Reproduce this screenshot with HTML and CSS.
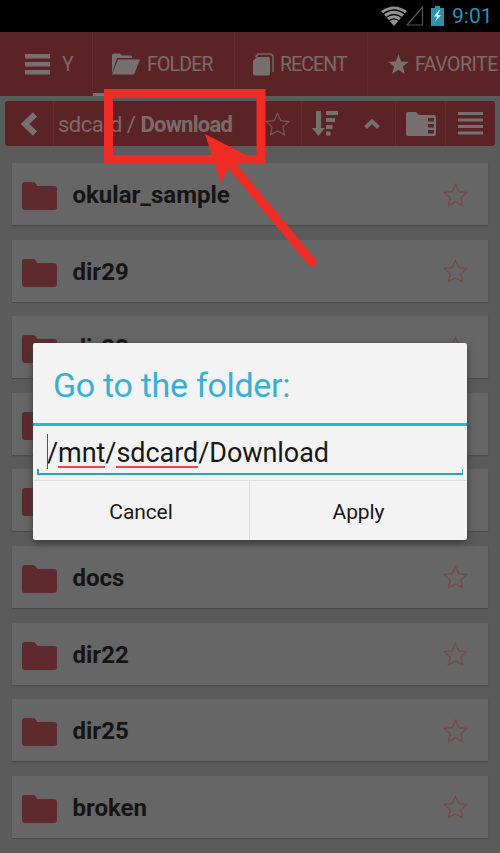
FILE: index.html
```html
<!DOCTYPE html>
<html lang="en">
<head>
<meta charset="utf-8">
<title>Folder</title>
<link rel="stylesheet" href="styles.css">
</head>
<body>
<svg class="defs" width="0" height="0">
  <symbol id="folder" viewBox="0 0 35 28"><path d="M3 0H11Q13 0 14 2L15.500 4H32Q35 4 35 7V25Q35 28 32 28H3Q0 28 0 25V3Q0 0 3 0Z"/></symbol>
  <symbol id="star" viewBox="0 0 24 24"><path d="M12 1.500L14.800 8.800L22.700 9.200L16.600 14.100L18.700 21.800L12 17.600L5.300 21.800L7.400 14.100L1.300 9.200L9.200 8.800Z"/></symbol>
  <symbol id="star-outline" viewBox="0 0 24 24"><path d="M12 1.500L15.200 8.300L22.700 9.200L17.200 14.300L18.700 21.800L12 18.200L5.300 21.800L6.800 14.300L1.300 9.200L8.800 8.300Z"/></symbol>
</svg>
<div class="screen">
  <header class="status">
    <svg class="wifi" width="26" height="20" viewBox="0 0 26 20"><path d="M0 5Q13-4 26 5L13 20Z" fill="#929292"/><path d="M1.500 8.500Q13-.5 24.500 8.500M4.500 12Q13 5 21.500 12M7.500 15.200Q13 10.500 18.500 15.200" fill="none" stroke="#000" stroke-width="1.300"/></svg>
    <svg class="signal" width="18" height="20" viewBox="0 0 18 20"><path d="M1 19L16.500 1V19Z" fill="none" stroke="#55524d" stroke-width="1.200"/></svg>
    <svg class="battery" width="13" height="20" viewBox="0 0 13 20"><path d="M4 0H9V2H13V20H0V2H4Z" fill="#2b8fae"/><path d="M8 4L3 10.500H6L4 16L10 9H7L9 4Z" fill="#d9eef4"/></svg>
    <span class="clock">9:01</span>
  </header>
  <nav class="tabs">
    <div class="tab tab-menu"><svg width="25" height="21" viewBox="0 0 25 21"><path d="M0 0H25V4.500H0ZM0 8H25V12.500H0ZM0 16H25V20.500H0Z"/></svg><span>Y</span></div>
    <div class="tab tab-folder active"><svg width="28" height="22" viewBox="0 0 28 22"><path d="M0 20V2Q0 .5 1.500 .5H8L10 2.500H19Q20 2.500 20 4V5H5L0 20ZM6 6.500H28L22 21.500H0Z"/></svg><span>FOLDER</span></div>
    <div class="tab tab-recent"><svg width="21" height="23" viewBox="0 0 21 23"><path d="M4 4H15Q17 4 17 6V20.500Q17 22.500 15 22.500H2Q0 22.500 0 20.500V8Z"/><path d="M2.500 4L5 1H17Q20 1 20 4V19" fill="none" stroke="#72696a" stroke-width="1.500"/></svg><span>RECENT</span></div>
    <div class="tab tab-favorite"><svg width="23" height="23"><use href="#star"/></svg><span>FAVORITE</span></div>
  </nav>
  <div class="toolbar">
    <div class="tool back"><svg width="17" height="24" viewBox="0 0 17 24"><path d="M14 2.500L4 12L14 21.500" fill="none" stroke="#777071" stroke-width="6"/></svg></div>
    <div class="path"><span class="crumb">sdcard /</span><b>Download</b><svg class="outline" width="25" height="25"><use href="#star-outline"/></svg></div>
    <div class="tool sort"><svg width="27" height="25" viewBox="0 0 27 25"><path d="M4 0H9V17H13L6.500 25L0 17H4ZM14 0H26V4H14ZM14 7H23V11H14ZM14 14H20.500V18H14ZM14 20.500H18.500V24.500H14Z"/></svg></div>
    <div class="tool up"><svg width="16" height="10" viewBox="0 0 16 10"><path d="M1.500 8.500L8 2.500L14.500 8.500" fill="none" stroke="#777071" stroke-width="4"/></svg></div>
    <div class="tool storage"><svg width="30" height="24" viewBox="0 0 30 24"><path fill-rule="evenodd" d="M2 0H10L13 3H28Q30 3 30 5V22Q30 24 28 24H2Q0 24 0 22V2Q0 0 2 0ZM22 6V9.500H28V6ZM22 12V15.500H28V12ZM22 18V21.500H28V18Z"/></svg></div>
    <div class="tool list"><svg width="25" height="23" viewBox="0 0 25 23"><path d="M0 0H25V3H0ZM0 6.500H25V9.500H0ZM0 13H25V16H0ZM0 19.500H25V22.500H0Z"/></svg></div>
  </div>
  <main class="files">
    <div class="row"><svg class="folder"><use href="#folder"/></svg><b>okular_sample</b><svg class="fav"><use href="#star-outline"/></svg></div>
    <div class="row"><svg class="folder"><use href="#folder"/></svg><b>dir29</b><svg class="fav"><use href="#star-outline"/></svg></div>
    <div class="row"><svg class="folder"><use href="#folder"/></svg><b>dir28</b><svg class="fav"><use href="#star-outline"/></svg></div>
    <div class="row"><svg class="folder"><use href="#folder"/></svg></div>
    <div class="row"><svg class="folder"><use href="#folder"/></svg></div>
    <div class="row"><svg class="folder"><use href="#folder"/></svg><b>docs</b><svg class="fav"><use href="#star-outline"/></svg></div>
    <div class="row"><svg class="folder"><use href="#folder"/></svg><b>dir22</b><svg class="fav"><use href="#star-outline"/></svg></div>
    <div class="row"><svg class="folder"><use href="#folder"/></svg><b>dir25</b><svg class="fav"><use href="#star-outline"/></svg></div>
    <div class="row"><svg class="folder"><use href="#folder"/></svg><b>broken</b><svg class="fav"><use href="#star-outline"/></svg></div>
  </main>
  <svg class="callout" width="220" height="190" viewBox="100 80 220 190"><rect x="108.500" y="93.500" width="152.500" height="66" fill="none" stroke="#ee2b24" stroke-width="9"/><path d="M205 134L250 157L231 163L221 183Z" fill="#ee2b24"/><path d="M229 162L312 262" stroke="#ee2b24" stroke-width="9" stroke-linecap="round"/></svg>
  <section class="dialog">
    <h1><span>Go to the folder:</span></h1>
    <div class="field"><span class="value">/<u>mnt</u>/<u>sdcard</u>/Download</span><i class="caret"></i></div>
    <div class="actions"><button><span>Cancel</span></button><button><span>Apply</span></button></div>
  </section>
</div>
</body>
</html>
```
FILE: styles.css
```css
* { box-sizing: border-box; }
body { margin: 0; font-family: Roboto, sans-serif; }
svg { display: block; flex: none; fill: #777071; }
.defs { position: absolute; }
.screen { position: relative; width: 500px; height: 853px; overflow: hidden; background: #5b5b5b; }
.status { height: 32px; background: #000; display: flex; justify-content: flex-end; align-items: center; padding-right: 8px; }
.signal { margin-left: -1px; }
.battery { margin-left: 7px; }
.clock { margin-left: 8px; width: 40px; font-size: 21px; line-height: 32px; color: #3190af; white-space: nowrap; }
.tabs { height: 64px; display: flex; background: #5c2327; overflow: hidden; color: #7b6b6c; font-size: 19.500px; letter-spacing: -0.800px; }
.tab { display: flex; align-items: center; flex: none; border-right: 1px solid #642b2f; white-space: nowrap; }
.tab-menu { width: 93px; padding-left: 25px; gap: 12px; }
.tab-folder { width: 142px; padding-left: 19px; gap: 7px; }
.active { border-bottom: 3px solid #7b7475; padding-top: 3px; }
.tab-recent { width: 133px; padding-left: 18px; gap: 6px; letter-spacing: -0.900px; }
.tab-favorite { width: 132px; padding-left: 19px; gap: 5px; border: 0; letter-spacing: -0.450px; }
.toolbar { height: 45px; margin: 5px 5px 0; display: flex; background: #5c2327; border-radius: 3px; color: #7b6b6c; }
.tool { display: flex; align-items: center; justify-content: center; border-right: 1px solid #642b2f; }
.back { width: 49px; }
.path { width: 248px; display: flex; align-items: center; padding: 1px 0 0 4px; font-size: 22px; border-right: 1px solid #642b2f; white-space: nowrap; }
.crumb { letter-spacing: -0.500px; }
.path b { margin-left: 5px; letter-spacing: -0.750px; }
.path .outline { margin-left: auto; margin-right: 11px; fill: none; stroke: #7b5557; stroke-width: 1.200; }
.sort { width: 47px; border: 0; }
.up { width: 47px; }
.storage { width: 50px; }
.list { width: 49px; border: 0; }
.files { padding: 17px 12px 0; display: flex; flex-direction: column; gap: 14.600px; }
.row { height: 62px; flex: none; display: flex; align-items: center; background: #666; padding: 2px 20px 0 10px; box-shadow: 0 1px 1px #4b4b4b; color: #151515; font-size: 24px; }
.row b { margin-left: 15.500px; }
.folder { width: 35px; height: 28px; fill: #5e2a2d; margin-top: 2px; }
.fav { width: 25px; height: 25px; margin-left: auto; fill: none; stroke: #754b4e; stroke-width: 1.400; }
.callout { position: absolute; left: 100px; top: 80px; }
.dialog { position: absolute; left: 33px; top: 343px; width: 434px; height: 197px; display: flex; flex-direction: column; background: #f3f3f3; border-radius: 2px; box-shadow: 0 3px 9px #3c3c3c; }
h1 { height: 83px; flex: none; margin: 0; padding-left: 20px; font-weight: 400; font-size: 34px; line-height: 84px; letter-spacing: -0.300px; color: #3aafd5; border-bottom: 3px solid #38afd0; }
.field { position: relative; height: 49px; margin: 0 4px 5px; padding-left: 10px; border-bottom: 2px solid #2d9fc2; font-size: 27px; line-height: 55px; letter-spacing: -0.060px; color: #171717; }
.field::before, .field::after { content: ""; position: absolute; bottom: 0; width: 1.500px; height: 4px; background: #2d9fc2; }
.field::before { left: 0; }
.field::after { right: 0; }
.field u { display: inline-block; height: 31px; line-height: 32px; text-decoration: none; border-bottom: 2px solid #e8474b; }
.caret { position: absolute; left: 10px; top: 8px; width: 1px; height: 35px; background: #555; }
.actions { flex: 1; display: grid; grid-template-columns: 1fr 1fr; border-top: 1px solid #dedede; }
button { border: 0; background: none; padding: 2px 0 0; font: 21px Roboto, sans-serif; letter-spacing: -0.100px; color: #171717; }
button:first-child { border-right: 1px solid #dedede; }
```
